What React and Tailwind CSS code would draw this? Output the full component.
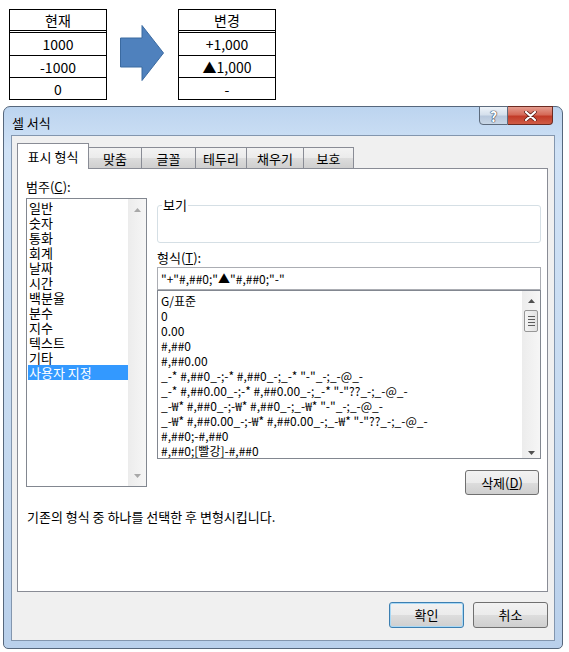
import React from "react";

function Table({ head, rows }) {
  return (
    <div className="w-[98px] border border-black text-[14px] leading-none">
      <div className="h-[23px] flex items-center justify-center border-b-[3px] border-double border-black">{head}</div>
      <div className="h-[23px] flex items-center justify-center border-b border-black">{rows[0]}</div>
      <div className="h-[22px] flex items-center justify-center border-b border-black">{rows[1]}</div>
      <div className="h-[21px] flex items-center justify-center">{rows[2]}</div>
    </div>
  );
}

function UpTri({ color }) {
  return (
    <svg width="7" height="4" viewBox="0 0 7 4">
      <polygon points="0,4 3.5,0 7,4" fill={color} />
    </svg>
  );
}
function DownTri({ color }) {
  return (
    <svg width="7" height="4" viewBox="0 0 7 4">
      <polygon points="0,0 3.5,4 7,0" fill={color} />
    </svg>
  );
}

function TabBtn({ children, w }) {
  return (
    <div
      className={
        "h-[21px] border-t border-r border-[#898c95] bg-[linear-gradient(#f3f3f3,#ebebeb_50%,#dddddd_50%,#cfcfcf)] flex items-center justify-center pt-[1px] text-[13px] " +
        w
      }
    >
      {children}
    </div>
  );
}

const categories = ["일반", "숫자", "통화", "회계", "날짜", "시간", "백분율", "분수", "지수", "텍스트", "기타"];
const formats = [
  "G/표준",
  "0",
  "0.00",
  "#,##0",
  "#,##0.00",
  '_-* #,##0_-;-* #,##0_-;_-* "-"_-;_-@_-',
  '_-* #,##0.00_-;-* #,##0.00_-;_-* "-"??_-;_-@_-',
  '_-₩* #,##0_-;-₩* #,##0_-;_-₩* "-"_-;_-@_-',
  '_-₩* #,##0.00_-;-₩* #,##0.00_-;_-₩* "-"??_-;_-@_-',
  "#,##0;-#,##0",
  "#,##0;[빨강]-#,##0",
];

function Dialog() {
  return (
    <div className="ml-[3px] w-[560px] h-[543px] relative flex flex-col rounded-t-[7px] rounded-b-[5px] border border-[#56677c] bg-[linear-gradient(#bcd4ef,#d0e2f6_8%,#c6daf0_60%,#b9d0eb)]">
      <div className="h-[28px] flex items-center pl-[8px] pt-[3px] text-[13px] leading-none text-black">셀 서식</div>
      <div className="absolute top-[-1px] right-[9px] flex">
        <div className="w-[29px] h-[19px] border border-[#5d6b7d] rounded-bl-[4px] bg-[linear-gradient(#eef3f9,#d5e0ec_45%,#b8c8dc_55%,#c9d7e7)] flex items-center justify-center text-[14px] font-bold leading-none text-white [text-shadow:0_0_1px_#2c3b4f,0_0_1px_#2c3b4f,0_0_1px_#2c3b4f]">
          ?
        </div>
        <div className="w-[45px] h-[19px] border border-l-0 border-[#6b2b22] rounded-br-[4px] bg-[linear-gradient(#e59c8f,#d56a58_45%,#c23b28_55%,#cf5c46)] flex items-center justify-center">
          <svg width="13" height="10" viewBox="0 0 13 10">
            <path d="M2 1 L11 9 M11 1 L2 9" stroke="#5a1d15" strokeWidth="3.6" strokeLinecap="round" />
            <path d="M2 1 L11 9 M11 1 L2 9" stroke="#ffffff" strokeWidth="2.2" strokeLinecap="round" />
          </svg>
        </div>
      </div>
      <div className="mx-[7px] mb-[7px] flex-1 border border-[#8396ae] bg-[#f0f0f0] flex flex-col pt-[7px] pl-[5px] pr-[6px]">
        {/* tabs */}
        <div className="flex items-end h-[25px] relative z-10">
          <div className="w-[72px] h-[26px] -mb-[1px] bg-white border border-b-0 border-[#898c95] flex items-center justify-center pt-[1px] text-[13px]">
            표시 형식
          </div>
          <TabBtn w="w-[53px]">맞춤</TabBtn>
          <TabBtn w="w-[54px]">글꼴</TabBtn>
          <TabBtn w="w-[51px]">테두리</TabBtn>
          <TabBtn w="w-[57px]">채우기</TabBtn>
          <TabBtn w="w-[50px]">보호</TabBtn>
        </div>
        {/* page */}
        <div className="h-[424px] bg-white border border-[#898c95] flex flex-col pl-[8px] text-[12px]">
          <div className="flex items-start">
            {/* left col */}
            <div className="w-[121px] mt-[11px] flex flex-col">
              <div className="h-[14px] leading-[14px] text-[13px]">
                범주(<span className="underline">C</span>):
              </div>
              <div className="mt-[4px] h-[289px] border border-[#828790] flex">
                <div className="flex-1 pt-[1px] pl-[1px] flex flex-col text-[13px]">
                  {categories.map((c) => (
                    <div key={c} className="h-[15px] leading-[15px] pl-[1px]">
                      {c}
                    </div>
                  ))}
                  <div className="h-[15px] leading-[15px] pl-[1px] bg-[#3399ff] text-white">사용자 지정</div>
                </div>
                <div className="w-[18px] bg-[linear-gradient(90deg,#ececec,#f6f6f6)] flex flex-col items-center justify-between pt-[9px] pb-[8px]">
                  <UpTri color="#a8a8a8" />
                  <DownTri color="#a8a8a8" />
                </div>
              </div>
            </div>
            {/* right col */}
            <div className="ml-[10px] w-[384px] mt-[30px] flex flex-col">
              <fieldset className="h-[44px] border border-[#d5dfe5] rounded-[3px]">
                <legend className="ml-[4px] px-[1px] leading-[12px] text-[13px]">보기</legend>
              </fieldset>
              <div className="mt-[8px] h-[14px] leading-[14px] text-[13px]">
                형식(<span className="underline">T</span>):
              </div>
              <div className="mt-[2px] h-[23px] border border-[#abadb3] flex items-center px-[3px] whitespace-nowrap">
                "+"#,##0;"▲"#,##0;"-"
              </div>
              <div className="h-[169px] border border-[#828790] flex">
                <div className="flex-1 pt-[2px] pl-[3px] flex flex-col overflow-hidden">
                  {formats.map((f) => (
                    <div key={f} className="h-[15px] leading-[15px] whitespace-nowrap">
                      {f}
                    </div>
                  ))}
                </div>
                <div className="w-[18px] bg-[linear-gradient(90deg,#ececec,#f6f6f6)] flex flex-col items-center pt-[8px] pb-[3px]">
                  <UpTri color="#505050" />
                  <div className="mt-[7px] w-[14px] h-[22px] border border-[#979797] rounded-[2px] bg-[linear-gradient(90deg,#f4f4f4,#e2e2e2)] flex flex-col items-center justify-center gap-[2px]">
                    <div className="w-[7px] h-[1px] bg-[#5c5c5c]" />
                    <div className="w-[7px] h-[1px] bg-[#5c5c5c]" />
                    <div className="w-[7px] h-[1px] bg-[#5c5c5c]" />
                    <div className="w-[7px] h-[1px] bg-[#5c5c5c]" />
                  </div>
                  <div className="flex-1" />
                  <DownTri color="#505050" />
                </div>
              </div>
              <div className="mt-[11px] self-end mr-[2px] w-[74px] h-[25px] border border-[#707070] rounded-[3px] bg-[linear-gradient(#f2f2f2,#ebebeb_50%,#dddddd_50%,#cfcfcf)] flex items-center justify-center text-[13px]">
                삭제(<span className="underline">D</span>)
              </div>
            </div>
          </div>
          <div className="mt-[15px] ml-[1px] h-[14px] leading-[14px] text-[13px]">기존의 형식 중 하나를 선택한 후 변형시킵니다.</div>
        </div>
        {/* buttons */}
        <div className="mt-[10px] h-[26px] flex justify-end gap-[9px] text-[13px]">
          <div className="w-[75px] h-[26px] border border-[#3c7fb1] rounded-[3px] shadow-[inset_0_0_0_1px_#a8d8f5] bg-[linear-gradient(#f2f2f2,#ebebeb_50%,#dddddd_50%,#cfcfcf)] flex items-center justify-center">
            확인
          </div>
          <div className="w-[75px] h-[26px] border border-[#707070] rounded-[3px] bg-[linear-gradient(#f2f2f2,#ebebeb_50%,#dddddd_50%,#cfcfcf)] flex items-center justify-center">
            취소
          </div>
        </div>
      </div>
    </div>
  );
}

export default function App() {
  return (
    <div className="w-[569px] h-[652px] bg-white overflow-hidden font-[family-name:'Noto_Sans_CJK_KR','Noto_Sans',sans-serif] text-black">
      <div className="flex items-start pl-[9px] pt-[9px] h-[106px]">
        <Table head="현재" rows={["1000", "-1000", "0"]} />
        <svg className="ml-[13px] mt-[16px]" width="44" height="56" viewBox="0 0 44 56">
          <polygon points="0.5,13 22,13 22,0.5 43.5,28 22,55.5 22,42 0.5,42" fill="#4f81bd" stroke="#3b6aa0" strokeWidth="1" />
        </svg>
        <div className="ml-[14px]">
          <Table head="변경" rows={["+1,000", "▲1,000", "-"]} />
        </div>
      </div>
      <Dialog />
    </div>
  );
}
